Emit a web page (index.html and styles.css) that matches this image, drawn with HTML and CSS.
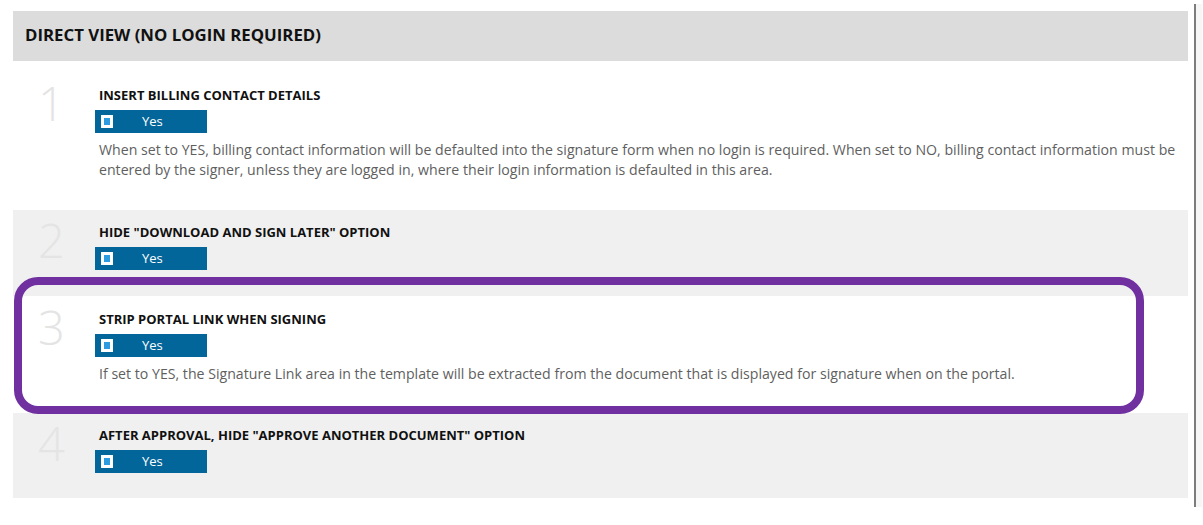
FILE: index.html
```html
<!DOCTYPE html>
<html>
<head>
<meta charset="utf-8">
<link rel="stylesheet" href="styles.css">
</head>
<body>
<div class="page">
  <div class="panel">
    <div class="panel-head">DIRECT VIEW (NO LOGIN REQUIRED)</div>
    <div class="row row-first">
      <div class="num">1</div>
      <div class="body">
        <div class="title">INSERT BILLING CONTACT DETAILS</div>
        <div class="toggle"><span class="box"></span><span class="label">Yes</span></div>
        <div class="desc">When set to YES, billing contact information will be defaulted into the signature form when no login is required. When set to NO, billing contact information must be entered by the signer, unless they are logged in, where their login information is defaulted in this area.</div>
      </div>
    </div>
    <div class="row row-alt">
      <div class="num">2</div>
      <div class="body">
        <div class="title">HIDE "DOWNLOAD AND SIGN LATER" OPTION</div>
        <div class="toggle"><span class="box"></span><span class="label">Yes</span></div>
      </div>
    </div>
    <div class="row row-highlight">
      <div class="num">3</div>
      <div class="body">
        <div class="title">STRIP PORTAL LINK WHEN SIGNING</div>
        <div class="toggle"><span class="box"></span><span class="label">Yes</span></div>
        <div class="desc">If set to YES, the Signature Link area in the template will be extracted from the document that is displayed for signature when on the portal.</div>
      </div>
    </div>
    <div class="row row-alt row-last">
      <div class="num">4</div>
      <div class="body">
        <div class="title">AFTER APPROVAL, HIDE "APPROVE ANOTHER DOCUMENT" OPTION</div>
        <div class="toggle"><span class="box"></span><span class="label">Yes</span></div>
      </div>
    </div>
  </div>
  <div class="rail"></div>
</div>
</body>
</html>
```
FILE: styles.css
```css
html, body {
  margin: 0;
  padding: 0;
  background: #ffffff;
}
body {
  font-family: "Open Sans", "Noto Sans", sans-serif;
  color: #222;
}
.page {
  display: flex;
  align-items: flex-start;
  width: 1203px;
  height: 525px;
}
.panel {
  width: 1175px;
  margin: 11px 0 0 13px;
}
.panel-head {
  background: #dcdcdc;
  height: 50px;
  box-sizing: border-box;
  padding: 13px 0 0 12px;
  font-size: 16.8px;
  font-weight: 700;
  color: #111;
  line-height: 22px;
}
.row {
  display: grid;
  grid-template-columns: 82px 1fr;
  padding: 13px 0 26px;
}
.row-first {
  padding-top: 25px;
  padding-bottom: 30px;
}
.row-alt {
  background: #f0f0f0;
}
.row-last {
  padding-bottom: 25px;
}
.row-highlight {
  position: relative;
  padding-top: 14px;
  padding-bottom: 29px;
}
.row-highlight::after {
  content: "";
  position: absolute;
  top: -19px;
  left: 1px;
  right: 44px;
  bottom: -1px;
  border: 8px solid #7030a0;
  border-radius: 24px;
  pointer-events: none;
}
.num {
  font-size: 47px;
  font-weight: 300;
  color: #e4e4e4;
  line-height: 40px;
  padding-left: 25px;
  margin-top: -3px;
}
.body {
  display: flex;
  flex-direction: column;
  align-items: flex-start;
}
.title {
  font-size: 13px;
  font-weight: 700;
  color: #111;
  line-height: 18px;
  padding-left: 4px;
}
.toggle {
  margin-top: 6px;
  width: 112px;
  height: 23px;
  background: #03669a;
  display: flex;
  align-items: center;
  box-sizing: border-box;
  padding-left: 6px;
}
.box {
  width: 12px;
  height: 13px;
  box-sizing: border-box;
  background: #2d9be0;
  border: 3px solid #ffffff;
}
.label {
  color: #ffffff;
  font-size: 13px;
  margin-left: 29px;
  line-height: 23px;
}
.desc {
  margin-top: 7px;
  padding-left: 4px;
  font-size: 14.15px;
  line-height: 20px;
  color: #5f5f5f;
}
.rail {
  margin: 4px 0 0 6px;
  width: 8px;
  height: 503px;
  border-left: 2px solid #7d7d7d;
  background: #f6f6f6;
  box-sizing: border-box;
}
```
